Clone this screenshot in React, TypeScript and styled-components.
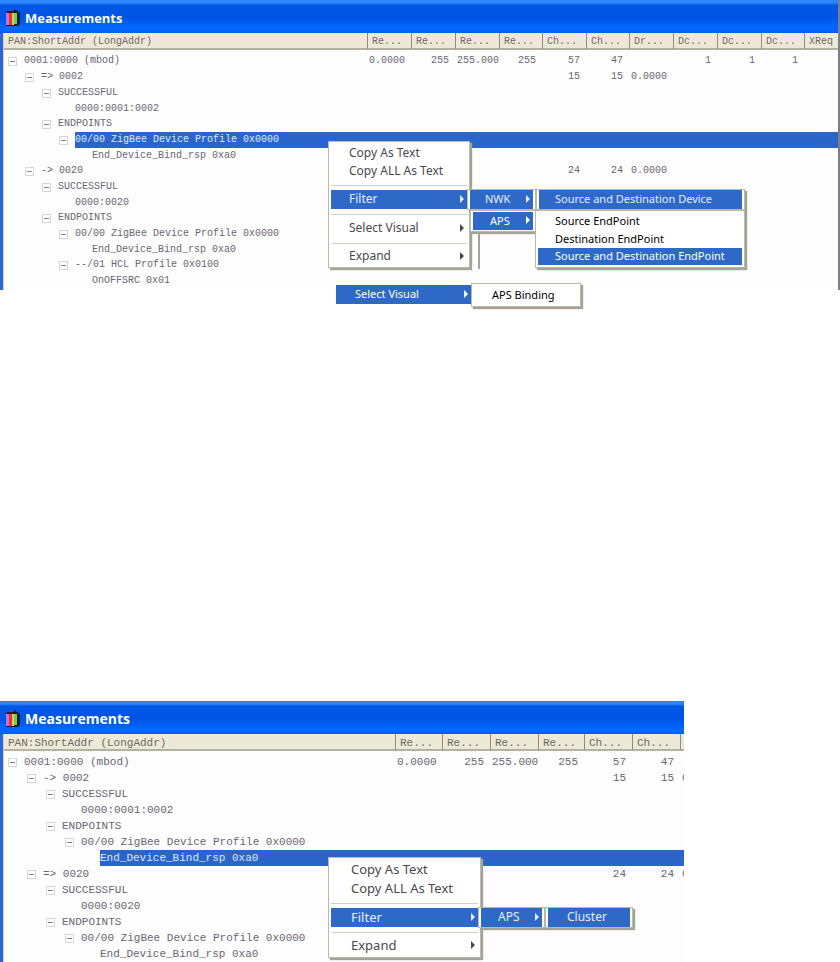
import React from "react";
import styled, { createGlobalStyle, css } from "styled-components";

const GlobalStyle = createGlobalStyle`
  * { box-sizing: border-box; }
  body { margin: 0; background: #fff; font-family: "Noto Sans", "Open Sans", sans-serif; }
  button { font: inherit; color: inherit; border: 0; padding: 0; background: none; }
`;

type Scale = "small" | "large";

const Page = styled.main`
  display: flex;
  flex-direction: column;
  gap: 411px;
  overflow: hidden;
`;

const Stage = styled.section<{ $max?: number }>`
  position: relative;
  width: 100%;
  ${(p) => p.$max && css`max-width: ${p.$max}px;`}
`;

const Frame = styled.div<{ $edge: boolean }>`
  display: flex;
  flex-direction: column;
  overflow: hidden;
  background: #fdfdfe;
  border-right: ${(p) => (p.$edge ? "2px solid #7d8088" : "0")};
`;

const TitleBar = styled.header<{ $scale: Scale }>`
  display: flex;
  align-items: center;
  gap: 4px;
  height: 33px;
  padding: 3px 5px 0;
  color: #fff;
  background: linear-gradient(#2a86fa 0, #2a86fa 3px, #0457e6 5px, #0054e3 18px, #0066fd 27px, #0068ff 31px, #0a56d8 33px);
  font-size: ${(p) => (p.$scale === "small" ? 13 : 14)}px;
`;

const Title = styled.h1`
  margin: 0;
  font-family: "Open Sans", "Noto Sans", sans-serif;
  font-size: inherit;
  line-height: 18px;
  font-weight: 700;
`;

const Body = styled.div<{ $pad: number }>`
  border-left: 3px solid #2a66dc;
  padding-bottom: ${(p) => p.$pad}px;
  box-shadow: inset 1px 0 0 #dccdb8;
  padding-left: 1px;
`;

const Grid = styled.table<{ $scale: Scale }>`
  width: 100%;
  table-layout: fixed;
  border-collapse: separate;
  border-spacing: 0;
  font-family: "Liberation Mono", monospace;
  font-size: ${(p) => (p.$scale === "small" ? 10 : 11)}px;
  color: #6b6672;
`;

const Col = styled.col<{ $w?: number }>`
  width: ${(p) => (p.$w ? `${p.$w}px` : "auto")};
`;

const HeadCell = styled.th`
  height: 17px;
  padding: 3px 0 0 4px;
  overflow: hidden;
  text-align: left;
  font-weight: 400;
  line-height: 12px;
  white-space: nowrap;
  color: #6f6b60;
  background: #ece9d8;
  border-right: 1px solid #8f8c80;
  border-bottom: 2px solid #b5b1a1;
  &:last-child { border-right: 0; }
`;

const Rows = styled.tbody`
  &::before {
    content: "";
    display: table-row;
    height: 3px;
  }
`;

const Row = styled.tr<{ $h: number; $selected?: boolean }>`
  height: ${(p) => p.$h}px;
  line-height: ${(p) => p.$h}px;
  color: ${(p) => (p.$selected ? "#dbe8ff" : "inherit")};
  td + td { background: ${(p) => (p.$selected ? "#2a66c9" : "none")}; }
`;

const TreeCell = styled.td`
  padding: 0;
`;

const Node = styled.div<{ $level: number; $scale: Scale }>`
  display: flex;
  align-items: center;
  padding-left: ${(p) => 4 + p.$level * (p.$scale === "small" ? 17 : 19)}px;
`;

const ToggleSlot = styled.span`
  display: flex;
  flex: none;
  width: 16px;
`;

const Toggle = styled.button`
  display: flex;
`;

const Label = styled.span<{ $selected?: boolean }>`
  flex: 1;
  white-space: pre;
  background: ${(p) => (p.$selected ? "#2a66c9" : "none")};
`;

const Value = styled.td`
  padding: 0 7px 0 1px;
  text-align: right;
  white-space: nowrap;
`;

const MenuLayer = styled.div<{ $top: number }>`
  position: absolute;
  left: 328px;
  top: ${(p) => p.$top}px;
  display: flex;
  flex-direction: column;
  gap: 14px;
`;

const MenuRow = styled.div<{ $inset?: number }>`
  display: flex;
  align-items: flex-start;
  padding-left: ${(p) => p.$inset ?? 0}px;
`;

const Flyouts = styled.div<{ $drop: number }>`
  display: flex;
  flex-direction: column;
  margin-left: -3px;
  padding-top: ${(p) => p.$drop}px;
`;

const MenuPanel = styled.ul<{ $w: number; $size: number; $pad?: number; $bare?: boolean }>`
  flex: none;
  width: ${(p) => p.$w}px;
  margin: 0;
  padding: ${(p) => p.$pad ?? 2}px 2px;
  list-style: none;
  background: #fff;
  border: 1px solid #bcb8a9;
  box-shadow: 2px 2px 1px #a5a297;
  font-size: ${(p) => p.$size}px;
  ${(p) => p.$bare && css`border: 0; padding: 0; margin-top: 2px; box-shadow: none;`}
`;

const Item = styled.button<{ $on?: boolean; $h: number; $indent: number; $soft?: boolean }>`
  display: flex;
  align-items: center;
  justify-content: space-between;
  width: 100%;
  height: ${(p) => p.$h}px;
  padding: 0 3px 2px ${(p) => p.$indent}px;
  text-align: left;
  white-space: nowrap;
  color: ${(p) => (p.$on ? (p.$soft ? "#e3edff" : "#fff") : p.$soft ? "#4a484c" : "#000")};
  background: ${(p) => (p.$on ? "#2f69c8" : "transparent")};
`;

const Rule = styled.li<{ $h: number }>`
  display: flex;
  align-items: center;
  height: ${(p) => p.$h}px;
  &::before {
    content: "";
    flex: 1;
    height: 1px;
    background: #d3d0c4;
  }
`;

const MenuEdge = styled.div`
  width: 6px;
  height: 35px;
  margin-left: 4px;
  background: #fff;
  border-right: 2px solid #a5a297;
`;

const Stack = styled.div`
  display: flex;
  flex: none;
  flex-direction: column;
  width: 65px;
  gap: 2px;
`;

function AppIcon() {
  return (
    <svg width="16" height="18" viewBox="0 0 16 18" aria-hidden="true">
      <path d="M2 2h10l3 2v11l-2 2H1V4z" fill="#2b1a2c" />
      <path d="M10 0l3 3h-5z" fill="#151515" />
      <path d="M1 4h3v12H1z" fill="#b777e6" />
      <path d="M4 4h3v12H4z" fill="#ef3038" />
      <path d="M7 4h2v12H7z" fill="#e9c64c" />
      <path d="M9 4h3v11H9z" fill="#52dc62" />
    </svg>
  );
}

function Minus() {
  return (
    <svg width="9" height="9" viewBox="0 0 9 9" aria-hidden="true">
      <rect x="0.5" y="0.5" width="8" height="8" fill="#fff" stroke="#d6d5d9" />
      <path d="M2 4.5h5" stroke="#85828a" />
    </svg>
  );
}

function Arrow() {
  return (
    <svg width="4" height="8" viewBox="0 0 4 8" aria-hidden="true">
      <path d="M0 0l4 4-4 4z" fill="currentColor" />
    </svg>
  );
}

interface TreeRow {
  level: number;
  text: string;
  leaf?: boolean;
  selected?: boolean;
  values?: string[];
}

interface WindowProps {
  scale: Scale;
  columns: string[];
  widths: number[];
  rows: TreeRow[];
  leafHeight: number;
  pad: number;
  edge: boolean;
}

function MeasurementsWindow({ scale, columns, widths, rows, leafHeight, pad, edge }: WindowProps) {
  return (
    <Frame $edge={edge}>
      <TitleBar $scale={scale}>
        <AppIcon />
        <Title>Measurements</Title>
      </TitleBar>
      <Body $pad={pad}>
        <Grid $scale={scale}>
          <colgroup>
            {widths.map((w, i) => <Col key={i} $w={w} />)}
            <Col />
          </colgroup>
          <thead>
            <tr>{columns.map((c, i) => <HeadCell key={i} scope="col">{c}</HeadCell>)}</tr>
          </thead>
          <Rows>
            {rows.map((r, i) => (
              <Row key={i} $h={r.leaf ? leafHeight : 16} $selected={r.selected}>
                <TreeCell>
                  <Node $level={r.level} $scale={scale}>
                    <ToggleSlot>
                      {!r.leaf && <Toggle type="button" aria-label={`Collapse ${r.text}`}><Minus /></Toggle>}
                    </ToggleSlot>
                    <Label $selected={r.selected}>{r.text}</Label>
                  </Node>
                </TreeCell>
                {columns.slice(1).map((_, c) => <Value key={c}>{r.values?.[c] ?? ""}</Value>)}
              </Row>
            ))}
          </Rows>
        </Grid>
      </Body>
    </Frame>
  );
}

interface Entry {
  text?: string;
  on?: boolean;
  arrow?: boolean;
  h: number;
}

interface MenuProps {
  w: number;
  size: number;
  indent?: number;
  pad?: number;
  soft?: boolean;
  bare?: boolean;
  entries: Entry[];
}

function Menu({ w, size, indent = 17, pad, soft, bare, entries }: MenuProps) {
  return (
    <MenuPanel role="menu" $w={w} $size={size} $pad={pad} $bare={bare}>
      {entries.map((e, i) =>
        e.text ? (
          <li key={i} role="none">
            <Item type="button" role="menuitem" $on={e.on} $h={e.h} $indent={indent} $soft={soft}>
              {e.text}
              {e.arrow && <Arrow />}
            </Item>
          </li>
        ) : (
          <Rule key={i} role="separator" $h={e.h} />
        )
      )}
    </MenuPanel>
  );
}

const totals = ["0.0000", "255", "255.000", "255", "57", "47"];

const firstRows: TreeRow[] = [
  { level: 0, text: "0001:0000 (mbod)", values: [...totals, "", "1", "1", "1"] },
  { level: 1, text: "=> 0002", values: ["", "", "", "", "15", "15", "0.0000"] },
  { level: 2, text: "SUCCESSFUL" },
  { level: 3, text: "0000:0001:0002", leaf: true },
  { level: 2, text: "ENDPOINTS" },
  { level: 3, text: "00/00 ZigBee Device Profile 0x0000", selected: true },
  { level: 4, text: "End_Device_Bind_rsp 0xa0", leaf: true },
  { level: 1, text: "-> 0020", values: ["", "", "", "", "24", "24", "0.0000"] },
  { level: 2, text: "SUCCESSFUL" },
  { level: 3, text: "0000:0020", leaf: true },
  { level: 2, text: "ENDPOINTS" },
  { level: 3, text: "00/00 ZigBee Device Profile 0x0000" },
  { level: 4, text: "End_Device_Bind_rsp 0xa0", leaf: true },
  { level: 3, text: "--/01 HCL Profile 0x0100" },
  { level: 4, text: "OnOFFSRC 0x01", leaf: true },
];

const secondRows: TreeRow[] = [
  { level: 0, text: "0001:0000 (mbod)", values: totals },
  { level: 1, text: "-> 0002", values: ["", "", "", "", "15", "15", "0"] },
  { level: 2, text: "SUCCESSFUL" },
  { level: 3, text: "0000:0001:0002", leaf: true },
  { level: 2, text: "ENDPOINTS" },
  { level: 3, text: "00/00 ZigBee Device Profile 0x0000" },
  { level: 4, text: "End_Device_Bind_rsp 0xa0", leaf: true, selected: true },
  { level: 1, text: "=> 0020", values: ["", "", "", "", "24", "24", "0"] },
  { level: 2, text: "SUCCESSFUL" },
  { level: 3, text: "0000:0020", leaf: true },
  { level: 2, text: "ENDPOINTS" },
  { level: 3, text: "00/00 ZigBee Device Profile 0x0000" },
  { level: 4, text: "End_Device_Bind_rsp 0xa0", leaf: true },
];

const nameColumn = "PAN:ShortAddr (LongAddr)";

export default function App() {
  return (
    <>
      <GlobalStyle />
      <Page>
        <Stage>
          <MeasurementsWindow
            scale="small"
            columns={[nameColumn, "Re...", "Re...", "Re...", "Re...", "Ch...", "Ch...", "Dr...", "Dc...", "Dc...", "Dc...", "XReq"]}
            widths={[364, 44, 44, 44, 43, 44, 43, 44, 44, 44, 43]}
            rows={firstRows}
            leafHeight={15}
            pad={2}
            edge
          />
          <MenuLayer $top={141}>
            <MenuRow>
              <Menu
                w={142} size={12} indent={18} soft
                entries={[
                  { text: "Copy As Text", h: 18 },
                  { text: "Copy ALL As Text", h: 18 },
                  { h: 10 },
                  { text: "Filter", on: true, arrow: true, h: 19 },
                  { h: 10 },
                  { text: "Select Visual", arrow: true, h: 19 },
                  { h: 10 },
                  { text: "Expand", arrow: true, h: 17 },
                ]}
              />
              <Flyouts $drop={48}>
                <MenuRow>
                  <Menu w={69} size={11} indent={15} pad={0} soft entries={[{ text: "NWK", on: true, arrow: true, h: 19 }]} />
                  <Menu w={209} size={11} indent={16} pad={0} soft entries={[{ text: "Source and Destination Device", on: true, h: 19 }]} />
                </MenuRow>
                <MenuRow $inset={3}>
                  <Stack>
                    <Menu w={66} size={11} pad={1} entries={[{ text: "APS", on: true, arrow: true, h: 18 }]} />
                    <MenuEdge />
                  </Stack>
                  <Menu
                    w={210} size={11}
                    entries={[
                      { text: "Source EndPoint", h: 17 },
                      { text: "Destination EndPoint", h: 18 },
                      { text: "Source and Destination EndPoint", on: true, h: 17 },
                    ]}
                  />
                </MenuRow>
              </Flyouts>
            </MenuRow>
            <MenuRow $inset={8}>
              <Menu w={135} size={11} indent={19} bare entries={[{ text: "Select Visual", on: true, arrow: true, h: 19 }]} />
              <Menu w={110} size={11} indent={18} entries={[{ text: "APS Binding", h: 18 }]} />
            </MenuRow>
          </MenuLayer>
        </Stage>
        <Stage $max={684}>
          <MeasurementsWindow
            scale="large"
            columns={[nameColumn, "Re...", "Re...", "Re...", "Re...", "Ch...", "Ch...", ""]}
            widths={[392, 47, 48, 48, 46, 48, 48]}
            rows={secondRows}
            leafHeight={16}
            pad={0}
            edge={false}
          />
          <MenuLayer $top={156}>
            <MenuRow>
              <Menu
                w={153} size={13} indent={20} soft
                entries={[
                  { text: "Copy As Text", h: 19 },
                  { text: "Copy ALL As Text", h: 19 },
                  { h: 10 },
                  { text: "Filter", on: true, arrow: true, h: 19 },
                  { h: 10 },
                  { text: "Expand", arrow: true, h: 18 },
                ]}
              />
              <Flyouts $drop={50}>
                <MenuRow>
                  <Menu w={67} size={12} indent={17} pad={0} soft entries={[{ text: "APS", on: true, arrow: true, h: 19 }]} />
                  <Menu w={88} size={12} indent={19} pad={0} soft entries={[{ text: "Cluster", on: true, h: 19 }]} />
                </MenuRow>
              </Flyouts>
            </MenuRow>
          </MenuLayer>
        </Stage>
      </Page>
    </>
  );
}
